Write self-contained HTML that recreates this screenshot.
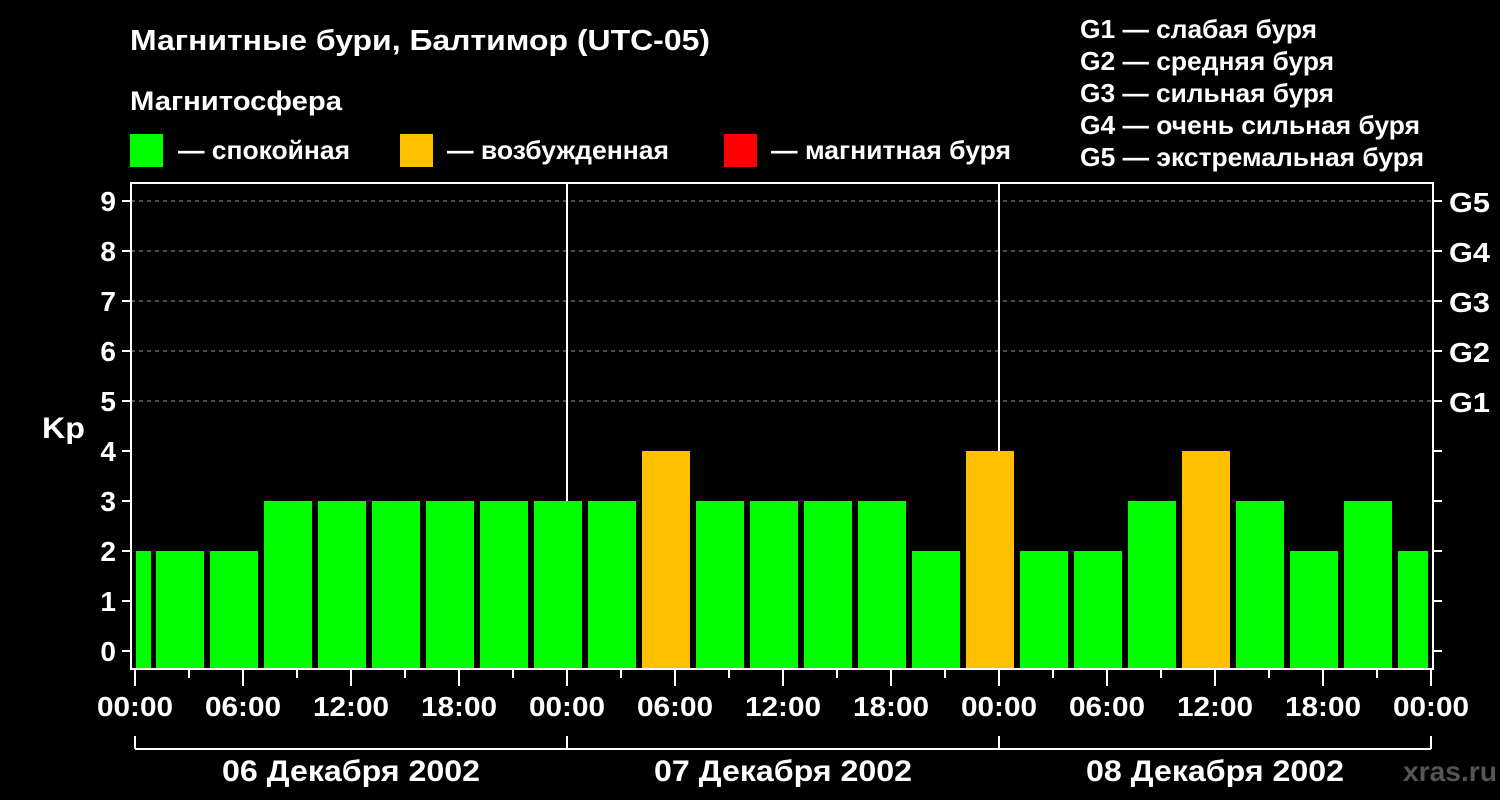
<!DOCTYPE html>
<html><head><meta charset="utf-8"><style>
html,body{margin:0;padding:0;background:#000;}
svg{display:block;}
text{font-family:"Liberation Sans",Arial,sans-serif;font-weight:bold;fill:#fff;}
</style></head><body>
<svg width="1500" height="800" viewBox="0 0 1500 800" xmlns="http://www.w3.org/2000/svg">
<rect width="1500" height="800" fill="#000"/>
<text x="130" y="50" font-size="29" textLength="580" lengthAdjust="spacingAndGlyphs">Магнитные бури, Балтимор (UTC-05)</text>
<text x="130" y="110" font-size="27" textLength="212" lengthAdjust="spacingAndGlyphs">Магнитосфера</text>
<rect x="130" y="134" width="33" height="33" fill="#00ff00"/>
<text x="178" y="159" font-size="26" textLength="172" lengthAdjust="spacingAndGlyphs">— спокойная</text>
<rect x="400" y="134" width="33" height="33" fill="#ffc000"/>
<text x="447" y="159" font-size="26" textLength="222" lengthAdjust="spacingAndGlyphs">— возбужденная</text>
<rect x="724" y="134" width="33" height="33" fill="#ff0000"/>
<text x="771" y="159" font-size="26" textLength="240" lengthAdjust="spacingAndGlyphs">— магнитная буря</text>
<g font-size="26">
<text x="1080" y="38" textLength="237" lengthAdjust="spacingAndGlyphs">G1 — слабая буря</text>
<text x="1080" y="70" textLength="254" lengthAdjust="spacingAndGlyphs">G2 — средняя буря</text>
<text x="1080" y="102" textLength="254" lengthAdjust="spacingAndGlyphs">G3 — сильная буря</text>
<text x="1080" y="134" textLength="340" lengthAdjust="spacingAndGlyphs">G4 — очень сильная буря</text>
<text x="1080" y="166" textLength="344" lengthAdjust="spacingAndGlyphs">G5 — экстремальная буря</text>
</g>
<g stroke="#999" stroke-dasharray="4,4" stroke-width="1">
<line x1="131" y1="201" x2="1433" y2="201"/>
<line x1="131" y1="251" x2="1433" y2="251"/>
<line x1="131" y1="301" x2="1433" y2="301"/>
<line x1="131" y1="351" x2="1433" y2="351"/>
<line x1="131" y1="401" x2="1433" y2="401"/>
</g>
<g>
<rect x="136" y="551" width="15" height="117" fill="#00ff00"/>
<rect x="156" y="551" width="48" height="117" fill="#00ff00"/>
<rect x="210" y="551" width="48" height="117" fill="#00ff00"/>
<rect x="264" y="501" width="48" height="167" fill="#00ff00"/>
<rect x="318" y="501" width="48" height="167" fill="#00ff00"/>
<rect x="372" y="501" width="48" height="167" fill="#00ff00"/>
<rect x="426" y="501" width="48" height="167" fill="#00ff00"/>
<rect x="480" y="501" width="48" height="167" fill="#00ff00"/>
<rect x="534" y="501" width="48" height="167" fill="#00ff00"/>
<rect x="588" y="501" width="48" height="167" fill="#00ff00"/>
<rect x="642" y="451" width="48" height="217" fill="#ffc000"/>
<rect x="696" y="501" width="48" height="167" fill="#00ff00"/>
<rect x="750" y="501" width="48" height="167" fill="#00ff00"/>
<rect x="804" y="501" width="48" height="167" fill="#00ff00"/>
<rect x="858" y="501" width="48" height="167" fill="#00ff00"/>
<rect x="912" y="551" width="48" height="117" fill="#00ff00"/>
<rect x="966" y="451" width="48" height="217" fill="#ffc000"/>
<rect x="1020" y="551" width="48" height="117" fill="#00ff00"/>
<rect x="1074" y="551" width="48" height="117" fill="#00ff00"/>
<rect x="1128" y="501" width="48" height="167" fill="#00ff00"/>
<rect x="1182" y="451" width="48" height="217" fill="#ffc000"/>
<rect x="1236" y="501" width="48" height="167" fill="#00ff00"/>
<rect x="1290" y="551" width="48" height="117" fill="#00ff00"/>
<rect x="1344" y="501" width="48" height="167" fill="#00ff00"/>
<rect x="1398" y="551" width="30" height="117" fill="#00ff00"/>
</g>
<g stroke="#fff" stroke-width="2" fill="none">
<rect x="131" y="183" width="1302" height="486"/>
<line x1="567" y1="183" x2="567" y2="501"/>
<line x1="999" y1="183" x2="999" y2="451"/>
<path d="M122 201h9M122 251h9M122 301h9M122 351h9M122 401h9M122 451h9M122 501h9M122 551h9M122 601h9M122 651h9"/>
<path d="M1433 201h9M1433 251h9M1433 301h9M1433 351h9M1433 401h9M1433 451h9M1433 501h9M1433 551h9M1433 601h9M1433 651h9"/>
<path d="M135 670v16M189 670v8M243 670v16M297 670v8M351 670v16M405 670v8M459 670v16M513 670v8M567 670v16M621 670v8M675 670v16M729 670v8M783 670v16M837 670v8M891 670v16M945 670v8M999 670v16M1053 670v8M1107 670v16M1161 670v8M1215 670v16M1269 670v8M1323 670v16M1377 670v8M1431 670v16"/>
<path d="M135 736v13M567 736v13M999 736v13M1431 736v13M135 749H1431"/>
</g>
<g font-size="28" text-anchor="end">
<text x="116" y="211">9</text><text x="116" y="261">8</text><text x="116" y="311">7</text>
<text x="116" y="361">6</text><text x="116" y="411">5</text><text x="116" y="461">4</text>
<text x="116" y="511">3</text><text x="116" y="561">2</text><text x="116" y="611">1</text>
<text x="116" y="661">0</text>
</g>
<text x="42" y="438" font-size="30" textLength="43" lengthAdjust="spacingAndGlyphs">Kp</text>
<g font-size="28">
<text x="1449" y="212" textLength="41" lengthAdjust="spacingAndGlyphs">G5</text><text x="1449" y="262" textLength="41" lengthAdjust="spacingAndGlyphs">G4</text><text x="1449" y="312" textLength="41" lengthAdjust="spacingAndGlyphs">G3</text>
<text x="1449" y="362" textLength="41" lengthAdjust="spacingAndGlyphs">G2</text><text x="1449" y="412" textLength="41" lengthAdjust="spacingAndGlyphs">G1</text>
</g>
<g font-size="28">
<text x="97" y="716" textLength="76" lengthAdjust="spacingAndGlyphs">00:00</text>
<text x="205" y="716" textLength="76" lengthAdjust="spacingAndGlyphs">06:00</text>
<text x="313" y="716" textLength="76" lengthAdjust="spacingAndGlyphs">12:00</text>
<text x="421" y="716" textLength="76" lengthAdjust="spacingAndGlyphs">18:00</text>
<text x="529" y="716" textLength="76" lengthAdjust="spacingAndGlyphs">00:00</text>
<text x="637" y="716" textLength="76" lengthAdjust="spacingAndGlyphs">06:00</text>
<text x="745" y="716" textLength="76" lengthAdjust="spacingAndGlyphs">12:00</text>
<text x="853" y="716" textLength="76" lengthAdjust="spacingAndGlyphs">18:00</text>
<text x="961" y="716" textLength="76" lengthAdjust="spacingAndGlyphs">00:00</text>
<text x="1069" y="716" textLength="76" lengthAdjust="spacingAndGlyphs">06:00</text>
<text x="1177" y="716" textLength="76" lengthAdjust="spacingAndGlyphs">12:00</text>
<text x="1285" y="716" textLength="76" lengthAdjust="spacingAndGlyphs">18:00</text>
<text x="1393" y="716" textLength="76" lengthAdjust="spacingAndGlyphs">00:00</text>
<text x="222" y="781" font-size="30" textLength="258" lengthAdjust="spacingAndGlyphs">06 Декабря 2002</text>
<text x="654" y="781" font-size="30" textLength="258" lengthAdjust="spacingAndGlyphs">07 Декабря 2002</text>
<text x="1086" y="781" font-size="30" textLength="258" lengthAdjust="spacingAndGlyphs">08 Декабря 2002</text>
</g>
<text x="1403" y="781" font-size="28" textLength="94" lengthAdjust="spacingAndGlyphs" style="fill:#555">xras.ru</text>
</svg>
</body></html>
